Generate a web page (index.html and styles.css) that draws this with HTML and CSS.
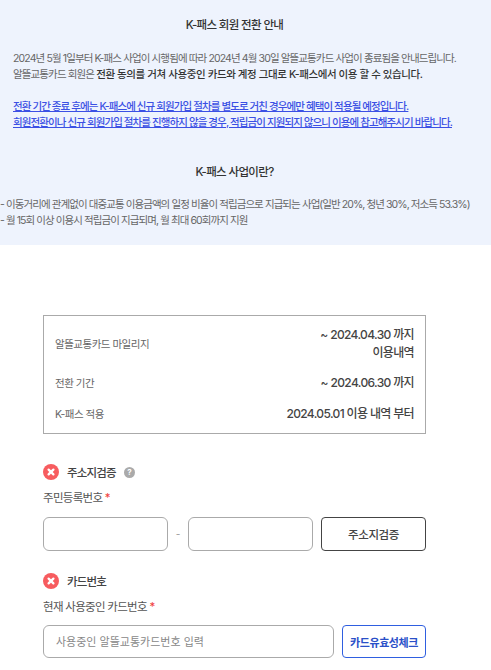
FILE: index.html
```html
<!DOCTYPE html>
<html lang="ko">
<head>
<meta charset="utf-8">
<title>K-패스 회원 전환 안내</title>
<link rel="stylesheet" href="styles.css">
</head>
<body>
<section class="notice">
  <h2 class="notice-title">K-패스 회원 전환 안내</h2>
  <div class="notice-body">
    <p>2024년 5월 1일부터 K-패스 사업이 시행됨에 따라 2024년 4월 30일 알뜰교통카드 사업이 종료됨을 안내드립니다.<br>알뜰교통카드 회원은 <strong>전환 동의를 거쳐 사용중인 카드와 계정 그대로 K-패스에서 이용 할 수 있습니다.</strong></p>
    <p class="notice-link">전환 기간 종료 후에는 K-패스에 신규 회원가입 절차를 별도로 거친 경우에만 혜택이 적용될 예정입니다.<br>회원전환이나 신규 회원가입 절차를 진행하지 않을 경우, 적립금이 지원되지 않으니 이용에 참고해주시기 바랍니다.</p>
  </div>
  <h2 class="notice-title second">K-패스 사업이란?</h2>
  <p class="notice-list">- 이동거리에 관계없이 대중교통 이용금액의 일정 비율이 적립금으로 지급되는 사업(일반 20%, 청년 30%, 저소득 53.3%)<br>- 월 15회 이상 이용시 적립금이 지급되며, 월 최대 60회까지 지원</p>
</section>

<main class="content">
  <div class="summary">
    <div class="summary-row">
      <span class="summary-label">알뜰교통카드 마일리지</span>
      <span class="summary-value">~ 2024.04.30 까지<br>이용내역</span>
    </div>
    <div class="summary-row">
      <span class="summary-label">전환 기간</span>
      <span class="summary-value">~ 2024.06.30 까지</span>
    </div>
    <div class="summary-row">
      <span class="summary-label">K-패스 적용</span>
      <span class="summary-value">2024.05.01 이용 내역 부터</span>
    </div>
  </div>

  <div class="section-head first">
    <svg class="status" viewBox="0 0 16 16" aria-hidden="true"><circle cx="8" cy="8" r="8" fill="#f75c5f"/><path d="M5.6 5.6l4.8 4.8M10.4 5.6l-4.8 4.8" stroke="#fff" stroke-width="2.3" stroke-linecap="round"/></svg>
    <span>주소지검증</span>
    <span class="help">?</span>
  </div>
  <div class="field-label">주민등록번호 <em>*</em></div>
  <div class="row">
    <input class="input" type="text" aria-label="주민등록번호 앞자리">
    <span class="dash">-</span>
    <input class="input" type="text" aria-label="주민등록번호 뒷자리">
    <button class="btn btn-dark" type="button">주소지검증</button>
  </div>

  <div class="section-head second">
    <svg class="status" viewBox="0 0 16 16" aria-hidden="true"><circle cx="8" cy="8" r="8" fill="#f75c5f"/><path d="M5.6 5.6l4.8 4.8M10.4 5.6l-4.8 4.8" stroke="#fff" stroke-width="2.3" stroke-linecap="round"/></svg>
    <span>카드번호</span>
  </div>
  <div class="field-label">현재 사용중인 카드번호 <em>*</em></div>
  <div class="row card-row">
    <input class="input grow" type="text" placeholder="사용중인 알뜰교통카드번호 입력">
    <button class="btn btn-blue" type="button">카드유효성체크</button>
  </div>
</main>
</body>
</html>
```
FILE: styles.css
```css
* { box-sizing: border-box; }
html, body { margin: 0; padding: 0; }
body {
  width: 491px;
  height: 670px;
  overflow: hidden;
  background: #fff;
  color: #333;
  font-family: Inter, "Noto Sans CJK KR", "Noto Sans", sans-serif;
}
.notice {
  height: 245px;
  padding-top: 17px;
  background: #eef3fd;
  font-size: 10.5px;
  letter-spacing: -0.88px;
  line-height: 16.3px;
  color: #666;
}
.notice-title {
  margin: 0;
  padding-right: 22px;
  text-align: center;
  font-size: 11.5px;
  letter-spacing: -0.65px;
  line-height: 16px;
  font-weight: 500;
  color: #333;
}
.notice-title.second { margin-top: 33px; }
.notice-body { padding: 0 13px; margin-top: 18px; }
.notice-body p { margin: 0; white-space: nowrap; }
.notice-body strong { font-weight: 500; color: #333; letter-spacing: -0.4px; }
.notice-body .notice-link {
  margin-top: 15px;
  color: #3b50e4;
  font-weight: 500;
  letter-spacing: -0.9px;
  text-decoration: underline;
}
.notice-list { margin: 17px 0 0; white-space: nowrap; letter-spacing: -0.92px; }

.content { padding: 70px 65px 0 43px; }
.summary {
  width: 383px;
  height: 119px;
  padding: 10px 11px 0;
  border: 1px solid #aaa;
}
.summary-row {
  display: flex;
  justify-content: space-between;
  align-items: center;
  margin-bottom: 13px;
}
.summary-label { font-size: 10.5px; letter-spacing: -0.5px; color: #666; }
.summary-value {
  text-align: right;
  font-size: 12px;
  letter-spacing: -0.65px;
  line-height: 17.5px;
  font-weight: 500;
  color: #444;
}
.section-head {
  display: flex;
  align-items: center;
  height: 16px;
  font-size: 11.5px;
  letter-spacing: -0.8px;
  font-weight: 500;
  color: #444;
}
.section-head.first { margin-top: 30px; }
.section-head.second { margin-top: 22px; }
.status { width: 16px; height: 16px; margin-right: 8px; }
.help {
  display: flex;
  align-items: center;
  justify-content: center;
  width: 11px;
  height: 11px;
  margin-left: 8px;
  border-radius: 50%;
  background: #aaa;
  color: #fff;
  font-size: 8px;
  font-weight: 700;
  letter-spacing: 0;
}
.field-label {
  margin-top: 10px;
  font-size: 11.5px;
  letter-spacing: -0.7px;
  line-height: 16px;
  color: #555;
}
.field-label em { color: #f0403c; font-style: normal; }
.row {
  display: flex;
  align-items: stretch;
  width: 383px;
  height: 34px;
  margin-top: 11px;
}
.card-row { height: 33px; margin-top: 10px; }
.input {
  width: 125px;
  min-width: 0;
  padding: 0 12px;
  border: 1px solid #aaa;
  border-radius: 6px;
  background: #fff;
  font: 400 11px Inter, "Noto Sans CJK KR", sans-serif;
  letter-spacing: 0;
  color: #333;
}
.input::placeholder { color: #888; opacity: 1; }
.input.grow { width: 291px; margin-right: 8px; }
.dash {
  width: 20px;
  text-align: center;
  font-size: 10px;
  line-height: 34px;
  color: #999;
}
.btn {
  padding: 0;
  border-radius: 4px;
  background: #fff;
  font: 500 11.5px Inter, "Noto Sans CJK KR", sans-serif;
  letter-spacing: -0.4px;
}
.btn-dark {
  width: 105px;
  margin-left: 8px;
  border: 1px solid #444;
  color: #444;
}
.btn-blue {
  width: 84px;
  border: 1px solid #2f5fe0;
  color: #2a50c8;
  font-size: 11px;
  font-weight: 600;
  letter-spacing: -0.4px;
}
```
